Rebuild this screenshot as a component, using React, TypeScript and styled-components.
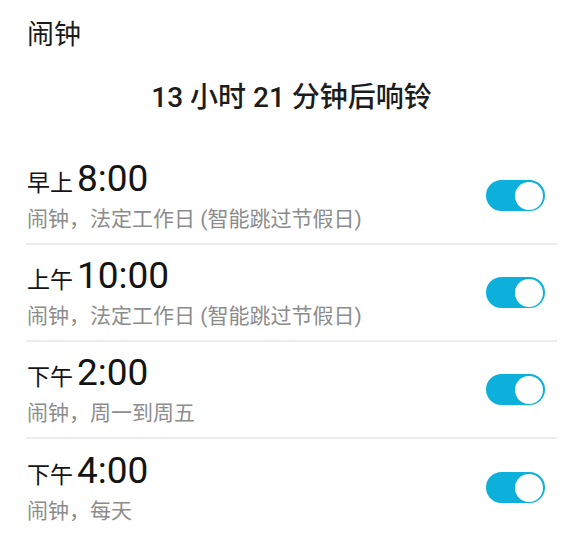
import React from 'react'
import styled, { createGlobalStyle } from 'styled-components'

interface Alarm {
  id: string
  period: string
  time: string
  note: string
  enabled: boolean
}

const alarms: Alarm[] = [
  { id: 'a1', period: '早上', time: '8:00', note: '闹钟，法定工作日 (智能跳过节假日)', enabled: true },
  { id: 'a2', period: '上午', time: '10:00', note: '闹钟，法定工作日 (智能跳过节假日)', enabled: true },
  { id: 'a3', period: '下午', time: '2:00', note: '闹钟，周一到周五', enabled: true },
  { id: 'a4', period: '下午', time: '4:00', note: '闹钟，每天', enabled: true },
]

const GlobalStyle = createGlobalStyle`
  body {
    margin: 0;
    background: #ffffff;
    font-family: Roboto, "Noto Sans CJK SC", sans-serif;
  }
`

const Screen = styled.div`
  width: 580px;
  height: 541px;
  overflow: hidden;
  background: #fff;
  padding: 17px 23px 0 26px;
  box-sizing: border-box;
`

const Title = styled.h1`
  margin: 0;
  padding-left: 1px;
  font-size: 27px;
  line-height: 36px;
  font-weight: 400;
  color: #1a1a1a;
`

const Countdown = styled.div`
  margin-top: 27px;
  text-align: center;
  font-size: 28px;
  line-height: 36px;
  font-weight: 500;
  color: #1c1c1c;
`

const List = styled.div`
  margin-top: 32px;
  display: flex;
  flex-direction: column;
`

const Row = styled.div<{ $last?: boolean }>`
  display: flex;
  align-items: center;
  justify-content: space-between;
  height: 97px;
  box-sizing: border-box;
  border-bottom: ${p => (p.$last ? 'none' : '2px solid #ececec')};
`

const Info = styled.div`
  display: flex;
  flex-direction: column;
  padding-left: 1px;
`

const TimeLine = styled.div`
  display: flex;
  align-items: baseline;
  gap: 4px;
  color: #141414;
  line-height: 42px;
`

const Period = styled.span`
  font-size: 23px;
`

const Clock = styled.span`
  font-size: 37px;
`

const Note = styled.div`
  font-size: 21px;
  line-height: 28px;
  color: #8c8c8c;
`

const Track = styled.div<{ $on: boolean }>`
  width: 59px;
  height: 31px;
  margin-right: 12px;
  border-radius: 16px;
  padding: 1px 2px;
  box-sizing: border-box;
  display: flex;
  align-items: center;
  justify-content: ${p => (p.$on ? 'flex-end' : 'flex-start')};
  background: ${p => (p.$on ? '#0cb0da' : '#cfcfcf')};
`

const Knob = styled.div`
  width: 28px;
  height: 28px;
  border-radius: 50%;
  background: #fff;
`

export default function App() {
  return (
    <>
      <GlobalStyle />
      <Screen>
        <Title>闹钟</Title>
        <Countdown>13 小时 21 分钟后响铃</Countdown>
        <List>
          {alarms.map((a, i) => (
            <Row key={a.id} $last={i === alarms.length - 1}>
              <Info>
                <TimeLine>
                  <Period>{a.period}</Period>
                  <Clock>{a.time}</Clock>
                </TimeLine>
                <Note>{a.note}</Note>
              </Info>
              <Track $on={a.enabled}>
                <Knob />
              </Track>
            </Row>
          ))}
        </List>
      </Screen>
    </>
  )
}
